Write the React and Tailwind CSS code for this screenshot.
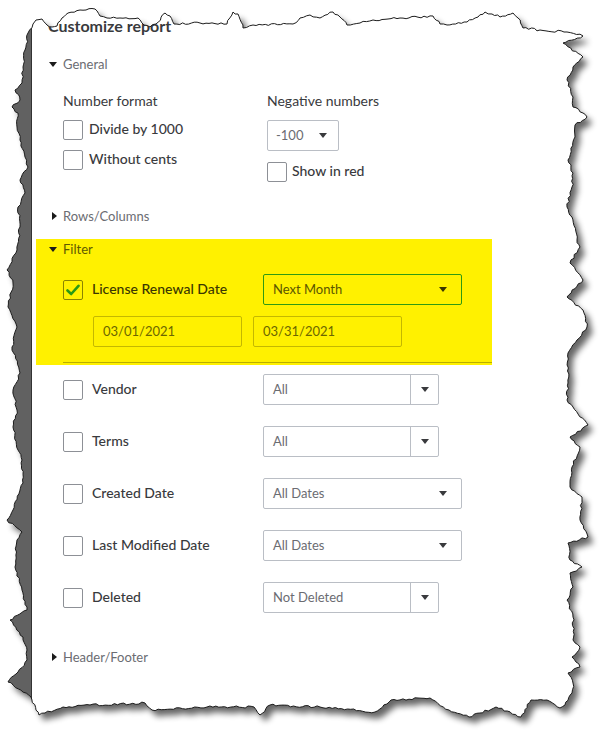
import { useMemo } from "react";

// rough outline of the torn paper cut-out (key points, clockwise from top-left)
const edgePoints = [
  [33, 24], [36, 20], [42, 19], [47, 25], [52, 27], [57, 26], [62, 18], [68, 13], [80, 10], [95, 9],
  [100, 16], [107, 18], [120, 18], [138, 18], [144, 25], [150, 27], [156, 24], [165, 13], [170, 16],
  [174, 24], [200, 23], [227, 24], [233, 12], [238, 14], [243, 28], [253, 25], [293, 24], [300, 18],
  [310, 15], [320, 18], [333, 12], [340, 17], [347, 25], [360, 23], [373, 20], [400, 18], [433, 16],
  [440, 24], [447, 25], [467, 22], [478, 17], [485, 12], [492, 14], [500, 17], [513, 13], [518, 18],
  [523, 28], [540, 30], [567, 32], [583, 36],
  [563, 43], [583, 57], [573, 67], [567, 80], [573, 97], [573, 107], [583, 113], [587, 117], [575, 125],
  [575, 137], [568, 160], [573, 173], [572, 187], [567, 207], [572, 217], [577, 240], [580, 247],
  [570, 263], [583, 280], [567, 297], [583, 310], [587, 327], [577, 340], [568, 353], [568, 383],
  [567, 400], [573, 407], [588, 425], [570, 437], [580, 447], [572, 467], [570, 487], [582, 497],
  [580, 520], [588, 537], [568, 543], [570, 560], [582, 567], [570, 573], [573, 587], [567, 600],
  [573, 617], [573, 640], [580, 647], [572, 657], [580, 667], [568, 673], [573, 683], [572, 693],
  [565, 705], [560, 708],
  [547, 700], [531, 700], [521, 717], [496, 707], [469, 717], [449, 710], [430, 698], [391, 700],
  [375, 712], [320, 707], [270, 705], [260, 715], [254, 707], [207, 707], [152, 710], [145, 703],
  [90, 705], [63, 707], [39, 715], [31, 697],
  [8, 682], [18, 672], [27, 660], [27, 650], [23, 637], [10, 620], [27, 610], [22, 590], [15, 567],
  [17, 540], [22, 532], [7, 520], [13, 510], [23, 483], [22, 460], [18, 450], [13, 427], [17, 410],
  [13, 390], [20, 373], [12, 347], [17, 327], [8, 307], [13, 283], [7, 270], [17, 250], [20, 227],
  [18, 207], [25, 193], [20, 180], [28, 167], [25, 157], [20, 140], [17, 127], [18, 113], [12, 107],
  [20, 100], [15, 90], [22, 83], [23, 67], [25, 50], [28, 33],
];

function mulberry32(a) {
  return function () {
    a |= 0;
    a = (a + 0x6d2b79f5) | 0;
    let t = Math.imul(a ^ (a >>> 15), 1 | a);
    t = (t + Math.imul(t ^ (t >>> 7), 61 | t)) ^ t;
    return ((t ^ (t >>> 14)) >>> 0) / 4294967296;
  };
}

function roughen(pts) {
  const rand = mulberry32(11);
  const out = [];
  for (let i = 0; i < pts.length; i++) {
    const [x0, y0] = pts[i];
    const [x1, y1] = pts[(i + 1) % pts.length];
    const len = Math.hypot(x1 - x0, y1 - y0) || 1;
    const n = Math.max(1, Math.round(len / 3));
    const nx = -(y1 - y0) / len;
    const ny = (x1 - x0) / len;
    for (let k = 0; k < n; k++) {
      const t = k / n;
      const j = k === 0 ? 0 : (rand() - 0.5) * 2.2;
      out.push([x0 + (x1 - x0) * t + nx * j, y0 + (y1 - y0) * t + ny * j]);
    }
  }
  return out;
}

const TriDown = () => (
  <svg width="8" height="5" viewBox="0 0 8 5">
    <path d="M0 0H8L4 5Z" fill="#1b1b1b" />
  </svg>
);

const TriRight = () => (
  <svg width="5" height="8" viewBox="0 0 5 8">
    <path d="M0 0L5 4L0 8Z" fill="#1b1b1b" />
  </svg>
);

const Caret = ({ color = "#393a3d" }) => (
  <svg width="8" height="5" viewBox="0 0 8 5">
    <path d="M0 0H8L4 5Z" fill={color} />
  </svg>
);

function SectionHeader({ open, label, color = "text-[#6b6c72]" }) {
  return (
    <div className="flex h-[18px] items-center">
      <div className="flex w-[9px] justify-end">{open ? <TriDown /> : <TriRight />}</div>
      <span className={`ml-[6px] text-[13px] font-normal leading-[18px] ${color}`}>{label}</span>
    </div>
  );
}

function Box({ checked }) {
  if (checked) {
    return (
      <div className="flex h-[20px] w-[20px] shrink-0 items-center justify-center rounded-[2px] border border-[#8a8400]">
        <svg width="14" height="12" viewBox="0 0 14 12">
          <path d="M1.5 6.5L5.2 10L12.5 1.8" fill="none" stroke="#2a9a14" strokeWidth="2.6" strokeLinecap="round" strokeLinejoin="round" />
        </svg>
      </div>
    );
  }
  return <div className="h-[20px] w-[20px] shrink-0 rounded-[2px] border border-[#8d9096] bg-white" />;
}

function Select({ text, split }) {
  if (split) {
    return (
      <div className="flex h-[31px] w-[176px] rounded-[2px] border border-[#babec5] bg-white">
        <div className="flex flex-1 items-center pl-[9px] text-[13px] text-[#6b6c72]">{text}</div>
        <div className="flex w-[28px] items-center justify-center border-l border-[#babec5]">
          <Caret />
        </div>
      </div>
    );
  }
  return (
    <div className="flex h-[31px] w-[199px] items-center justify-between rounded-[2px] border border-[#babec5] bg-white pl-[9px] pr-[14px] text-[13px] text-[#6b6c72]">
      <span>{text}</span>
      <Caret />
    </div>
  );
}

function FilterRow({ label, text, split }) {
  return (
    <div className="flex h-[31px] items-center">
      <div className="flex w-[200px] items-center">
        <Box />
        <span className="ml-[9px] mb-[2px] text-[14px] font-medium text-[#393a3d]">{label}</span>
      </div>
      <Select text={text} split={split} />
    </div>
  );
}

const filterRows = [
  { label: "Vendor", text: "All", split: true },
  { label: "Terms", text: "All", split: true },
  { label: "Created Date", text: "All Dates" },
  { label: "Last Modified Date", text: "All Dates" },
  { label: "Deleted", text: "Not Deleted", split: true },
];

function App() {
  const pts = useMemo(() => roughen(edgePoints), []);
  const d = "M" + pts.map(([x, y]) => `${x.toFixed(1)} ${y.toFixed(1)}`).join(" L") + " Z";
  const clip = `polygon(${pts.map(([x, y]) => `${x.toFixed(1)}px ${y.toFixed(1)}px`).join(",")})`;

  return (
    <div className="relative h-[742px] w-[611px] overflow-hidden bg-white font-['Lato','Noto_Sans',sans-serif]">
      <svg className="absolute left-0 top-0" width="611" height="742">
        <defs>
          <filter id="soft" x="-10%" y="-10%" width="120%" height="120%">
            <feGaussianBlur stdDeviation="3" />
          </filter>
        </defs>
        <path d={d} transform="translate(5 6)" fill="#000" opacity="0.6" filter="url(#soft)" />
      </svg>

      <div className="relative flex h-full w-full" style={{ clipPath: clip }}>
        <div className="w-[32px] shrink-0 border-r border-[#333] bg-[#616161]" />
        <div className="flex flex-1 flex-col bg-white pl-[16px] pt-[16px]">
          <div className="h-[20px] text-[16px] font-bold leading-[20px] text-[#393a3d]">Customize report</div>

          <div className="mt-[19px]">
            <SectionHeader open label="General" />
          </div>

          <div className="mt-[19px] flex pl-[15px] text-[#393a3d]">
            <div className="flex w-[204px] flex-col">
              <div className="h-[18px] text-[14px] leading-[18px]">Number format</div>
              <div className="mt-[10px] flex h-[20px] items-center">
                <Box />
                <span className="mb-[3px] ml-[6px] text-[14px] font-medium leading-[18px]">Divide by 1000</span>
              </div>
              <div className="mt-[10px] flex h-[20px] items-center">
                <Box />
                <span className="mb-[3px] ml-[6px] text-[14px] font-medium leading-[18px]">Without cents</span>
              </div>
            </div>
            <div className="flex flex-col">
              <div className="h-[18px] text-[14px] leading-[18px]">Negative numbers</div>
              <div className="mt-[10px] flex h-[31px] w-[72px] items-center justify-between rounded-[2px] border border-[#babec5] pl-[8px] pr-[11px] text-[13px] text-[#6b6c72]">
                <span>-100</span>
                <Caret />
              </div>
              <div className="mt-[11px] flex h-[20px] items-center">
                <Box />
                <span className="mb-[2px] ml-[5px] text-[14px] font-medium leading-[18px]">Show in red</span>
              </div>
            </div>
          </div>

          <div className="mt-[25px]">
            <SectionHeader label="Rows/Columns" />
          </div>

          <div className="ml-[-12px] mt-[14px] flex h-[126px] w-[456px] flex-col bg-[#fff100] pl-[12px] pt-[1px]">
            <SectionHeader open label="Filter" color="text-[#5f5a00]" />
            <div className="mt-[16px] flex h-[31px] items-center pl-[15px]">
              <div className="flex w-[200px] items-center">
                <Box checked />
                <span className="mb-[2px] ml-[9px] text-[14px] font-medium text-[#3a3700]">License Renewal Date</span>
              </div>
              <div className="flex h-[31px] w-[199px] items-center justify-between rounded-[2px] border border-[#2f9a12] pl-[9px] pr-[14px] text-[13px] text-[#5a5600]">
                <span>Next Month</span>
                <Caret color="#3a3700" />
              </div>
            </div>
            <div className="ml-[45px] mt-[11px] flex gap-[11px]">
              <div className="flex h-[31px] w-[149px] items-center rounded-[2px] border border-[#c4b800] pl-[9px] text-[13px] text-[#6b6600]">03/01/2021</div>
              <div className="flex h-[31px] w-[149px] items-center rounded-[2px] border border-[#c4b800] pl-[9px] text-[13px] text-[#6b6600]">03/31/2021</div>
            </div>
            <div className="ml-[15px] mt-[15px] h-px bg-[#b9ae00]" />
          </div>

          <div className="mt-[9px] flex flex-col gap-[21px] pl-[15px]">
            {filterRows.map((r) => (
              <FilterRow key={r.label} {...r} />
            ))}
          </div>

          <div className="mt-[35px]">
            <SectionHeader label="Header/Footer" />
          </div>
        </div>
      </div>

      <svg className="pointer-events-none absolute left-0 top-0" width="611" height="742">
        <path d={d} fill="none" stroke="#1c1c1c" strokeWidth="1" />
      </svg>
    </div>
  );
}

export default App;
